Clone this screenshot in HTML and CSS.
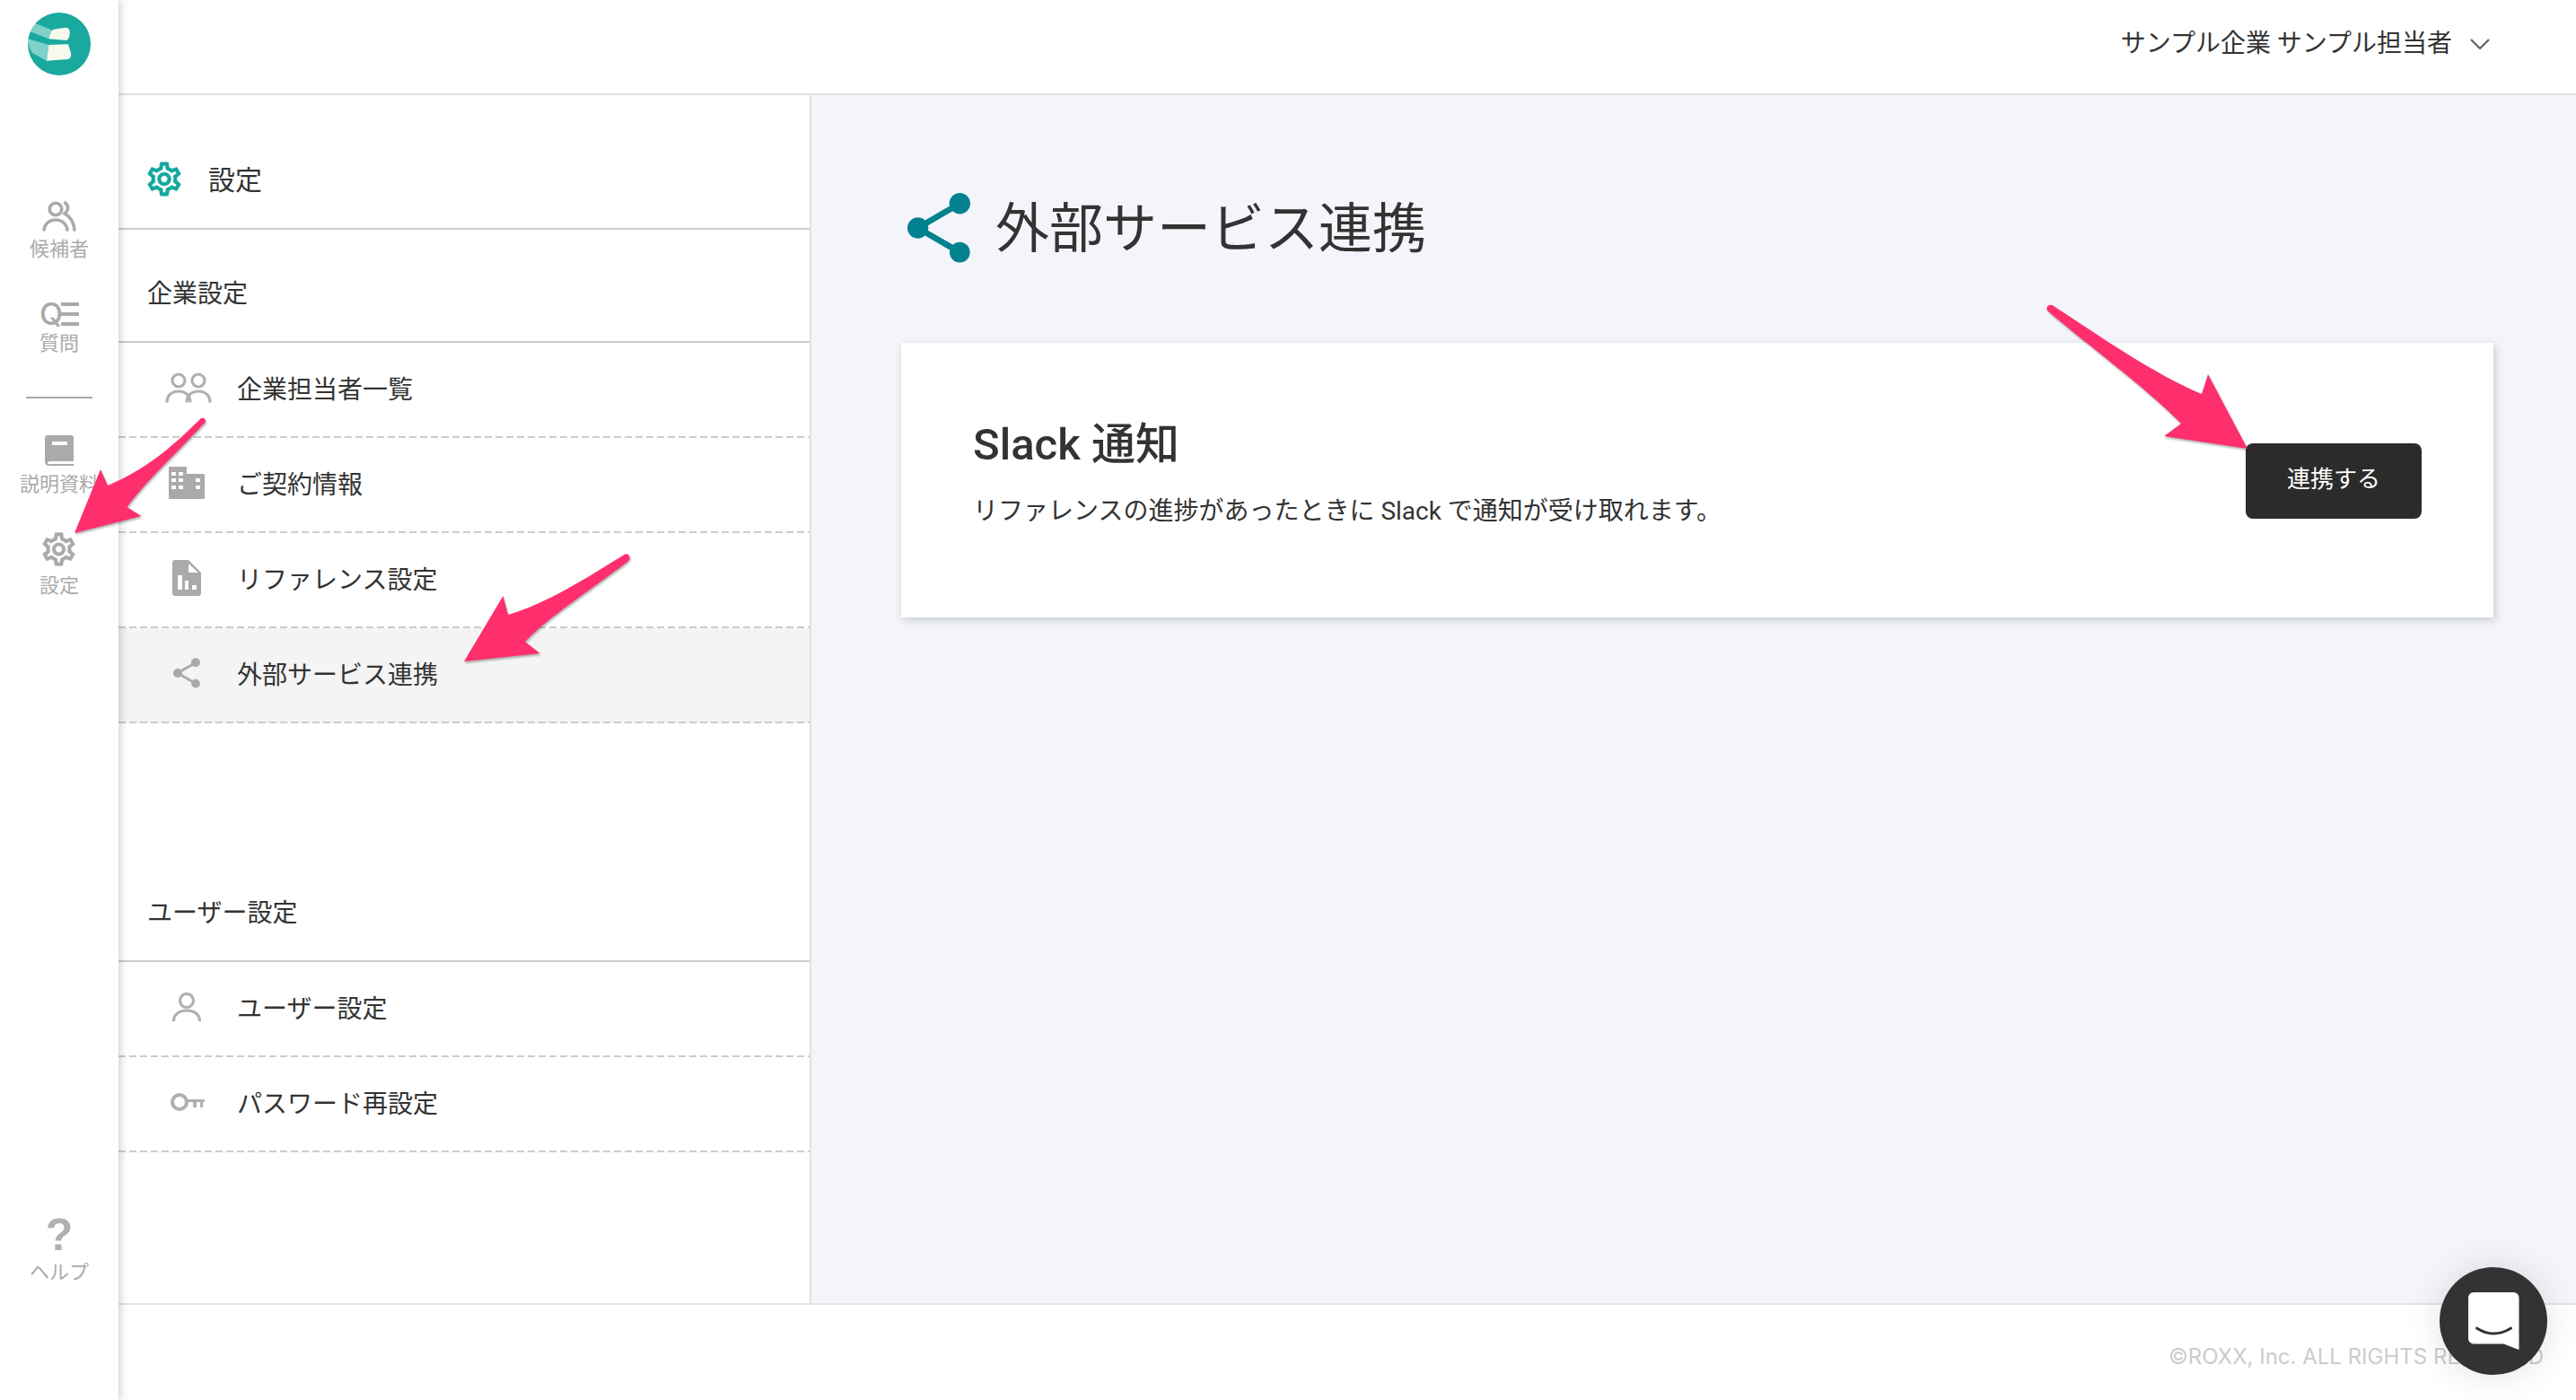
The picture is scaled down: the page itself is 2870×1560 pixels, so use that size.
FILE: index.html
```html
<!DOCTYPE html>
<html lang="ja">
<head>
<meta charset="utf-8">
<title>外部サービス連携</title>
<link rel="stylesheet" href="styles.css">
</head>
<body>
<svg class="defs" width="0" height="0" aria-hidden="true">
  <symbol id="gear" viewBox="1.400 1.400 21.200 21.200"><path d="M19.43 12.98c.04-.32.07-.64.07-.98 0-.34-.03-.66-.07-.98l2.11-1.65c.19-.15.24-.42.12-.64l-2-3.46c-.09-.16-.26-.25-.44-.25-.06 0-.12.01-.17.03l-2.49 1c-.52-.4-1.08-.73-1.69-.98l-.38-2.65C14.46 2.18 14.25 2 14 2h-4c-.25 0-.46.18-.49.42l-.38 2.65c-.61.25-1.17.59-1.69.98l-2.49-1c-.06-.02-.12-.03-.18-.03-.17 0-.34.09-.43.25l-2 3.46c-.13.22-.07.49.12.64l2.11 1.65c-.04.32-.07.65-.07.98 0 .33.03.66.07.98l-2.11 1.65c-.19.15-.24.42-.12.64l2 3.46c.09.16.26.25.44.25.06 0 .12-.01.17-.03l2.49-1c.52.4 1.08.73 1.69.98l.38 2.65c.03.24.24.42.49.42h4c.25 0 .46-.18.49-.42l.38-2.65c.61-.25 1.17-.59 1.69-.98l2.49 1c.06.02.12.03.18.03.17 0 .34-.09.43-.25l2-3.46c.12-.22.07-.49-.12-.64l-2.11-1.65zm-1.98-1.71c.04.31.05.52.05.73 0 .21-.02.43-.05.73l-.14 1.13.89.7 1.08.84-.7 1.21-1.27-.51-1.04-.42-.9.68c-.43.32-.84.56-1.25.73l-1.06.43-.16 1.13-.2 1.35h-1.4l-.19-1.35-.16-1.13-1.06-.43c-.43-.18-.83-.41-1.23-.71l-.91-.7-1.06.43-1.27.51-.7-1.21 1.08-.84.89-.7-.14-1.13c-.03-.31-.05-.54-.05-.74s.02-.43.05-.73l.14-1.13-.89-.7-1.08-.84.7-1.21 1.27.51 1.04.42.9-.68c.43-.32.84-.56 1.25-.73l1.06-.43.16-1.13.2-1.35h1.39l.19 1.35.16 1.13 1.06.43c.43.18.83.41 1.23.71l.91.7 1.06-.43 1.27-.51.7 1.21-1.07.85-.89.7.14 1.13zM12 8c-2.21 0-4 1.79-4 4s1.79 4 4 4 4-1.79 4-4-1.79-4-4-4zm0 6c-1.1 0-2-.9-2-2s.9-2 2-2 2 .9 2 2-.9 2-2 2z"/></symbol>
  <symbol id="share" viewBox="3 2 18 20"><path d="M18 16.08c-.76 0-1.44.3-1.96.77L8.91 12.7c.05-.23.09-.46.09-.7s-.04-.47-.09-.7l7.05-4.11c.54.5 1.25.81 2.04.81 1.66 0 3-1.34 3-3s-1.34-3-3-3-3 1.34-3 3c0 .24.04.47.09.7L8.04 9.81C7.5 9.31 6.79 9 6 9c-1.66 0-3 1.34-3 3s1.34 3 3 3c.79 0 1.5-.31 2.04-.81l7.12 4.16c-.05.21-.08.43-.08.65 0 1.61 1.31 2.92 2.92 2.92 1.61 0 2.92-1.31 2.92-2.92s-1.31-2.92-2.92-2.92z"/></symbol>
</svg>

<div class="app">
  <aside class="rail">
    <svg class="logo" viewBox="0 0 70 70" width="70" height="70">
      <circle cx="35" cy="35" r="35" fill="#19a99f"/>
      <path d="M8 12 26.700 19.300 23.300 29.300 2 21Z" fill="#fff" opacity=".45"/>
      <path d="M0 29.300 23.300 36 21 53.700 5 45Q0 38 0 29.300Z" fill="#fff" opacity=".45"/>
      <path d="M23.300 29.300 26 21Q27 19 30 18.500L42 16.800Q47 16.500 46.800 23 46.500 29 43 31Z" fill="#f8f9ee"/>
      <path d="M21 53.700 23.300 36 45 35.300 48.300 46Q48 51 45 52Z" fill="#f8f9ee"/>
    </svg>
    <a class="rail-item rail-first">
      <svg class="ico-stroke" viewBox="0 0 38 34" width="38" height="34">
        <circle cx="15" cy="9" r="6.800"/>
        <path d="M2 33.500C2 26 7.500 21 15 21S28 26 28 33.500"/>
        <path d="M24.500 1C28 3.500 29 6.500 28.500 9 28 11.500 26 13 25 14 31 17 36 24 36 33.500"/>
      </svg>
      <span class="rail-label">候補者</span>
    </a>
    <a class="rail-item">
      <span class="q-icon"><span class="q-letter">Q</span><svg viewBox="0 0 20 26" width="20" height="26" fill="#aaa"><rect y="0" width="20" height="4"/><rect y="11" width="20" height="4"/><rect y="22" width="20" height="4"/></svg></span>
      <span class="rail-label">質問</span>
    </a>
    <hr class="rail-divider">
    <a class="rail-item rail-docs">
      <svg viewBox="0 0 32 34" width="32" height="34">
        <path d="M3 0H29Q32 0 32 3V29H6Q3 29 3 31T6 32H32V34H5Q0 34 0 29V3Q0 0 3 0Z" fill="#aaa"/>
        <rect x="8" y="7" width="17" height="4" fill="#fff"/>
      </svg>
      <span class="rail-label">説明資料</span>
    </a>
    <a class="rail-item rail-gear">
      <svg class="ico-fill" width="39" height="42"><use href="#gear"/></svg>
      <span class="rail-label">設定</span>
    </a>
    <a class="rail-item rail-help">
      <span class="help-mark">?</span>
      <span class="rail-label">ヘルプ</span>
    </a>
  </aside>

  <div class="page">
    <header class="topbar">
      <span class="account">サンプル企業 サンプル担当者</span>
      <svg class="chevron" viewBox="0 0 22 12" width="22" height="12"><path d="M1 1 11 11 21 1"/></svg>
    </header>

    <div class="body">
      <nav class="side">
        <div class="side-top">
          <svg class="ico-teal" width="40" height="41"><use href="#gear"/></svg>
          <span>設定</span>
        </div>
        <h2 class="side-head">企業設定</h2>
        <ul class="side-list">
          <li class="side-row">
            <span class="side-ico"><svg class="ico-line ico-people" viewBox="0 0 52 34" width="52" height="34"><circle cx="15" cy="9" r="7"/><circle cx="37" cy="9" r="7"/><path d="M2 33.500C2 26 7 21 15 21S28 26 28 33.500"/><path d="M24 33.500C24 26 29 21 37 21S50 26 50 33.500"/></svg></span>
            <span>企業担当者一覧</span>
          </li>
          <li class="side-row">
            <span class="side-ico"><svg viewBox="0 0 40 36" width="40" height="36"><path fill="#aaa" fill-rule="evenodd" d="M1 0H20V8H39Q40 8 40 9V35Q40 36 39 36H1Q0 36 0 35V1Q0 0 1 0ZM3 6V10H8V6ZM11 6V10H16V6ZM3 13V17H8V13ZM11 13V17H16V13ZM3 21V25H8V21ZM11 21V25H16V21ZM30 13V17H35V13ZM30 21V25H35V21Z"/></svg></span>
            <span>ご契約情報</span>
          </li>
          <li class="side-row">
            <span class="side-ico"><svg viewBox="0 0 32 40" width="32" height="40"><path fill="#aaa" fill-rule="evenodd" d="M3 0H18L32 14V37Q32 40 29 40H3Q0 40 0 37V3Q0 0 3 0ZM18 4V14H29ZM6 17V33H11V17ZM14 23V33H18V23ZM22 28V33H27V28Z"/></svg></span>
            <span>リファレンス設定</span>
          </li>
          <li class="side-row is-active">
            <span class="side-ico"><svg class="ico-soft" width="30" height="34"><use href="#share"/></svg></span>
            <span>外部サービス連携</span>
          </li>
        </ul>
        <h2 class="side-head side-head-user">ユーザー設定</h2>
        <ul class="side-list">
          <li class="side-row">
            <span class="side-ico"><svg class="ico-line" viewBox="0 0 32 32" width="32" height="32"><circle cx="16" cy="9" r="7.500"/><path d="M1.500 32C1.500 24 8 20 16 20S30.500 24 30.500 32"/></svg></span>
            <span>ユーザー設定</span>
          </li>
          <li class="side-row">
            <span class="side-ico"><svg class="ico-key" viewBox="0 0 38 20" width="38" height="20"><circle cx="10" cy="10" r="8" fill="none" stroke="#b0b0b0" stroke-width="4"/><path fill="#b0b0b0" d="M18 7H38V10H36V16H33V10H29V16H25V10H18Z"/></svg></span>
            <span>パスワード再設定</span>
          </li>
        </ul>
      </nav>

      <main class="content">
        <h1 class="title">
          <svg class="ico-title" width="70" height="78"><use href="#share"/></svg>
          <span class="title-text">外部サービス連携</span>
        </h1>
        <section class="card">
          <div class="card-text">
            <h2 class="card-title">Slack 通知</h2>
            <p class="card-desc">リファレンスの進捗があったときに Slack で通知が受け取れます。</p>
          </div>
          <button class="btn" type="button">連携する</button>
        </section>
      </main>
    </div>

    <footer class="footer">©ROXX, Inc. ALL RIGHTS RESERVED</footer>
  </div>
</div>

<button class="chat" type="button" aria-label="chat">
  <svg viewBox="0 0 120 120" width="120" height="120">
    <path d="M38 28H82.500A6 6 0 0 1 88.500 34V92L71.500 85.500H38A6 6 0 0 1 32 79.500V34A6 6 0 0 1 38 28Z" fill="#fff"/>
    <path d="M41.500 68Q60 80 79.500 68" fill="none" stroke="#333" stroke-width="3" stroke-linecap="round"/>
  </svg>
</button>

<svg class="arrows" viewBox="0 0 2870 1560" width="2870" height="1560" aria-hidden="true">
  <path d="M229 470Q229 465 224 466C195 495 165 522 120 541L112 523 83 594 157.500 575 141.500 565C165 533 200 502 229 470Z"/>
  <path d="M699 626Q704 622 700 618 697 616 694 619C650 646 610 672 566 685L560.500 664 517 737 601.500 728 585 715C610 688 660 656 699 626Z"/>
  <path d="M2281 346Q2279 342 2283 340 2286 339 2288 341C2340 375 2400 417 2453 439L2460 417 2504 500 2411 486 2430 472C2390 431 2330 388 2281 346Z"/>
</svg>
</body>
</html>
```
FILE: styles.css
```css
* { box-sizing: border-box; }
html, body { margin: 0; padding: 0; }
body {
  width: 2870px;
  height: 1560px;
  overflow: hidden;
  position: relative;
  background: #fff;
  color: #333;
  font-family: "Roboto", "Noto Sans CJK JP", sans-serif;
}
.defs { position: absolute; }
.app { display: flex; height: 1560px; }

/* left rail */
.rail {
  width: 132px;
  flex: none;
  display: flex;
  flex-direction: column;
  align-items: center;
  padding: 14px 0 127px;
  background: #fff;
  box-shadow: 2px 0 9px rgba(0, 0, 0, .2);
  position: relative;
  z-index: 2;
}
.logo { flex: none; margin-bottom: 140px; }
.rail-item { display: flex; flex-direction: column; align-items: center; gap: 5px; margin-bottom: 44px; }
.rail-label { font-size: 22px; line-height: 30px; color: #aaa; white-space: nowrap; }
.rail-divider { width: 74px; height: 2px; margin: 0 0 41px; border: 0; background: #aaa; }
.rail-docs { gap: 6px; margin-bottom: 36px; }
.rail-help { margin: auto 0 0; gap: 9px; }
.ico-stroke { fill: none; stroke: #aaa; stroke-width: 3.600; }
.ico-fill { fill: #aaa; stroke: #aaa; stroke-width: .2; }
.q-icon { display: flex; align-items: center; gap: 2px; height: 26px; }
.q-letter { font-size: 34px; line-height: 26px; font-weight: 500; color: #aaa; width: 22px; text-align: center; font-family: "Inter", sans-serif; }
.help-mark { font-size: 50px; line-height: 36px; height: 36px; font-weight: 700; color: #b0b0b0; font-family: "Liberation Sans", sans-serif; }

/* page column */
.page { flex: 1; min-width: 0; display: flex; flex-direction: column; }
.topbar {
  height: 106px;
  flex: none;
  display: flex;
  align-items: center;
  justify-content: flex-end;
  padding: 0 96px 2px 0;
  gap: 20px;
  border-bottom: 2px solid #dfe3e8;
}
.account { font-size: 28px; line-height: 40px; margin-bottom: 5px; }
.chevron { fill: none; stroke: #666; stroke-width: 2.400; margin-bottom: 5px; }
.body { flex: 1; min-height: 0; display: flex; }

/* settings sidebar */
.side { width: 772px; flex: none; border-right: 2px solid #dfe1e5; background: #fff; }
.side-top {
  height: 150px;
  display: flex;
  align-items: center;
  gap: 29px;
  padding: 38px 0 0 31px;
  font-size: 30px;
  border-bottom: 2px solid #ccc;
}
.side-top span { margin-bottom: 2px; }
.ico-teal { fill: #13a89e; stroke: #13a89e; stroke-width: .2; flex: none; }
.side-head {
  height: 126px;
  margin: 0;
  display: flex;
  align-items: center;
  padding: 14px 0 0 32px;
  font-size: 28px;
  font-weight: 400;
  border-bottom: 2px solid #ccc;
}
.side-head-user { margin-top: 140px; }
.side-list { list-style: none; margin: 0; padding: 0; }
.side-row {
  height: 106px;
  display: flex;
  align-items: center;
  gap: 18px;
  padding: 0 0 6px 38px;
  font-size: 28px;
  background: repeating-linear-gradient(to right, #ccc 0 8px, transparent 8px 12px) left bottom / 100% 2px no-repeat;
}
.side-row.is-active { background-color: #f4f4f4; }
.side-ico { width: 76px; flex: none; display: flex; justify-content: center; align-items: center; }
.ico-line { fill: none; stroke: #b0b0b0; stroke-width: 3.200; }
.ico-people { margin-left: 4px; }
.ico-key { margin-left: 2px; }
.ico-soft { fill: #aaa; }

/* main */
.content { flex: 1; min-width: 0; background: #f4f5fa; padding: 109px 92px 0 100px; }
.title {
  display: flex;
  align-items: center;
  gap: 28px;
  height: 78px;
  margin: 0 0 89px;
  padding-left: 7px;
  font-size: 60px;
  font-weight: 400;
  line-height: 78px;
}
.title-text { padding-top: 3px; }
.ico-title { fill: #02828f; flex: none; }
.card {
  height: 306px;
  display: flex;
  align-items: flex-start;
  justify-content: space-between;
  padding: 84px 80px 0;
  background: #fff;
  box-shadow: 2px 3px 9px rgba(40, 50, 80, .22);
}
.card-title { margin: 0 0 22px; font-size: 49px; line-height: 60px; font-weight: 500; }
.card-desc { margin: 0; font-size: 28px; line-height: 44px; }
.btn {
  width: 196px;
  height: 84px;
  margin-top: 28px;
  padding: 0 0 10px;
  border: 0;
  border-radius: 8px;
  background: #2b2b2b;
  color: #fff;
  font: inherit;
  font-size: 26px;
}

/* footer */
.footer {
  height: 108px;
  flex: none;
  display: flex;
  align-items: center;
  justify-content: flex-end;
  padding: 9px 36px 0 0;
  border-top: 2px solid #e2e4e6;
  font-family: "Inter", sans-serif;
  font-size: 24px;
  color: #ccc;
}

/* overlays */
.chat {
  position: absolute;
  left: 2718px;
  top: 1412px;
  width: 120px;
  height: 120px;
  padding: 0;
  border: 0;
  border-radius: 50%;
  background: #333;
  box-shadow: 0 0 40px rgba(0, 0, 0, .12);
  z-index: 3;
}
.chat svg { display: block; }
.arrows {
  position: absolute;
  left: 0;
  top: 0;
  z-index: 4;
  fill: #ff2f6d;
  filter: drop-shadow(1px 2px 1px rgba(0, 0, 0, .3));
  pointer-events: none;
}
```
